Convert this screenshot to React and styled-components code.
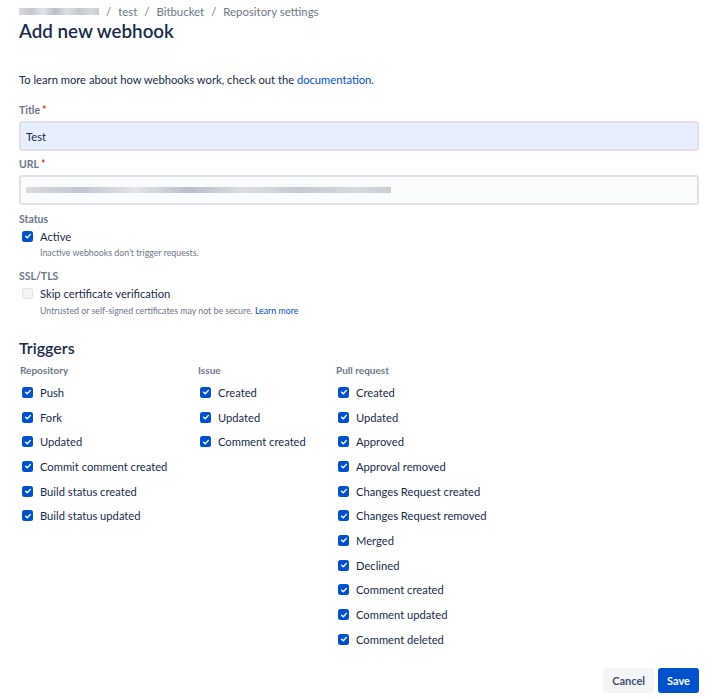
import React from 'react'
import styled, { createGlobalStyle } from 'styled-components'

const Global = createGlobalStyle`
  body {
    margin: 0;
    background: #fff;
    font-family: Lato, "Noto Sans", sans-serif;
    color: #172b4d;
  }
`

const Page = styled.div`
  width: 716px;
  height: 699px;
  padding: 3px 17px 0 19px;
  box-sizing: border-box;
  display: flex;
  flex-direction: column;
`

const Crumbs = styled.div`
  display: flex;
  align-items: center;
  gap: 7px;
  font-size: 11.4px;
  color: #6b778c;
  height: 16px;
`

const Blurred = styled.span`
  display: inline-block;
  width: ${p => p.w}px;
  height: ${p => p.h || 7}px;
  background: linear-gradient(90deg, #d9dbe0, #c2c6cf 15%, #e2e4e8 30%, #b9bec8 45%, #dcdee2 60%, #c4c8d0 75%, #d6d9de 90%, #c9ccd3);
  filter: blur(0.6px);
`

const Title = styled.h1`
  margin: 0;
  font-size: 18.8px;
  font-weight: 600;
  line-height: 24px;
`

const Intro = styled.p`
  margin: 29px 0 0;
  font-size: 11.2px;
  line-height: 16px;
`

const Link = styled.a`
  color: #0052cc;
  text-decoration: none;
`

const Label = styled.div`
  margin-top: ${p => p.mt || 14}px;
  font-size: 10.5px;
  font-weight: 700;
  color: #6b778c;
  line-height: 14px;
`

const Req = styled.span`
  color: #de350b;
  margin-left: 2px;
`

const Input = styled.div`
  margin-top: 4px;
  height: 30px;
  box-sizing: border-box;
  border: 2px solid #dfe1e6;
  border-radius: 3px;
  background: ${p => (p.filled ? '#e8effc' : '#fafbfc')};
  display: flex;
  align-items: center;
  padding: 0 5px;
  font-size: 11.2px;
`

const Check = styled.span`
  width: 11px;
  height: 11px;
  flex: none;
  border-radius: 2.5px;
  box-sizing: border-box;
  background: ${p => (p.on ? '#0052cc' : '#f4f5f7')};
  border: ${p => (p.on ? 'none' : '1.5px solid #dfe1e6')};
  display: flex;
  align-items: center;
  justify-content: center;
`

const CheckRow = styled.div`
  display: flex;
  align-items: center;
  gap: 7px;
  padding-left: 3px;
  height: ${p => p.h || 18}px;
  font-size: 11.2px;
  margin-top: ${p => p.mt || 0}px;
`

const Help = styled.div`
  padding-left: 21px;
  margin-top: ${p => p.mt || 0}px;
  font-size: 8.8px;
  color: #6b778c;
  line-height: 12px;
`

const SubTitle = styled.h2`
  margin: 21px 0 0;
  font-size: 16px;
  font-weight: 600;
  line-height: 20px;
`

const Columns = styled.div`
  display: grid;
  grid-template-columns: 178px 138px 1fr;
  margin-top: 5px;
`

const Col = styled.div`
  display: flex;
  flex-direction: column;
`

const ColHead = styled.div`
  font-size: 10px;
  font-weight: 700;
  color: #6b778c;
  line-height: 14px;
  padding-left: 1px;
  margin-bottom: 3px;
`

const Footer = styled.div`
  display: flex;
  justify-content: flex-end;
  gap: 4px;
  margin-top: 16px;
`

const Button = styled.button`
  height: 25px;
  border: none;
  border-radius: 3px;
  padding: 0 9px;
  font-family: inherit;
  font-size: 11px;
  font-weight: 700;
  background: ${p => (p.primary ? '#0052cc' : '#f4f5f7')};
  color: ${p => (p.primary ? '#fff' : '#42526e')};
`

const Tick = () => (
  <svg width="8" height="8" viewBox="0 0 8 8">
    <path d="M1.6 4.2 L3.3 5.8 L6.4 2.4" fill="none" stroke="#fff" strokeWidth="1.4" strokeLinecap="round" strokeLinejoin="round" />
  </svg>
)

const Box = ({ on = true, children, ...rest }) => (
  <CheckRow {...rest}>
    <Check on={on}>{on && <Tick />}</Check>
    <span>{children}</span>
  </CheckRow>
)

const triggers = [
  { head: 'Repository', items: ['Push', 'Fork', 'Updated', 'Commit comment created', 'Build status created', 'Build status updated'] },
  { head: 'Issue', items: ['Created', 'Updated', 'Comment created'] },
  {
    head: 'Pull request',
    items: ['Created', 'Updated', 'Approved', 'Approval removed', 'Changes Request created', 'Changes Request removed', 'Merged', 'Declined', 'Comment created', 'Comment updated', 'Comment deleted'],
  },
]

export default function App() {
  return (
    <>
      <Global />
      <Page>
        <Crumbs>
          <Blurred w={80} />
          <span>/</span>
          <span>test</span>
          <span>/</span>
          <span>Bitbucket</span>
          <span>/</span>
          <span>Repository settings</span>
        </Crumbs>
        <Title>Add new webhook</Title>
        <Intro>
          To learn more about how webhooks work, check out the <Link href="#">documentation</Link>.
        </Intro>

        <Label mt={15}>Title<Req>*</Req></Label>
        <Input filled>Test</Input>

        <Label mt={6}>URL<Req>*</Req></Label>
        <Input>
          <Blurred w={365} h={6} />
        </Input>

        <Label mt={7}>Status</Label>
        <Box h={20}>Active</Box>
        <Help mt={1}>Inactive webhooks don't trigger requests.</Help>

        <Label mt={10}>SSL/TLS</Label>
        <Box on={false} h={20}>Skip certificate verification</Box>
        <Help mt={2}>
          Untrusted or self-signed certificates may not be secure. <Link href="#">Learn more</Link>
        </Help>

        <SubTitle>Triggers</SubTitle>
        <Columns>
          {triggers.map(col => (
            <Col key={col.head}>
              <ColHead>{col.head}</ColHead>
              {col.items.map(item => (
                <Box key={item} h={24.7}>{item}</Box>
              ))}
            </Col>
          ))}
        </Columns>

        <Footer>
          <Button>Cancel</Button>
          <Button primary>Save</Button>
        </Footer>
      </Page>
    </>
  )
}
